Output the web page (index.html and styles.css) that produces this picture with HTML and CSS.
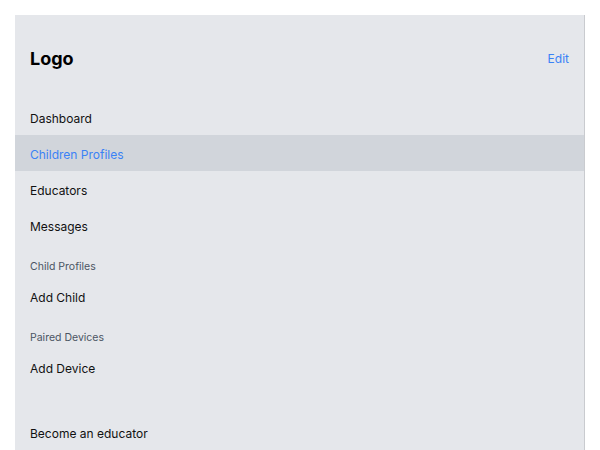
FILE: index.html
```html
<!DOCTYPE html>
<html lang="en">
<head>
    <meta charset="UTF-8">
    <meta name="viewport" content="width=device-width, initial-scale=1.0">
    <title>Sidebar</title>
    <link rel="stylesheet" href="styles.css">
</head>
<body>

    <aside class="sidebar">
        <div class="sidebar-header">
            <span class="logo">Logo</span>
            <a class="edit-link" href="#">Edit</a>
        </div>

        <nav class="nav">
            <a class="nav-item" href="#">Dashboard</a>
            <a class="nav-item active" href="#">Children Profiles</a>
            <a class="nav-item" href="#">Educators</a>
            <a class="nav-item" href="#">Messages</a>

            <div class="nav-label">Child Profiles</div>
            <a class="nav-item" href="#">Add Child</a>

            <div class="nav-label">Paired Devices</div>
            <a class="nav-item" href="#">Add Device</a>
        </nav>

        <div class="sidebar-footer">
            <a class="nav-item" href="#">Become an educator</a>
        </div>
    </aside>

</body>
</html>
```

FILE: styles.css
```css
body {
    margin: 0;
    padding: 15px 15px 0;
    background: #fff;
    font-family: 'Inter', 'Liberation Sans', sans-serif;
    color: #111;
}
.sidebar {
    background: #e5e7eb;
    border-right: 1px solid #c9cbcf;
    min-height: calc(100vh - 15px);
    box-sizing: border-box;
    display: flex;
    flex-direction: column;
}
.sidebar-header {
    display: flex;
    justify-content: space-between;
    align-items: center;
    height: 84px;
    padding: 3px 15px 0;
    box-sizing: border-box;
}
.logo {
    font-size: 18px;
    font-weight: 700;
    color: #000;
}
.edit-link {
    font-size: 12px;
    color: #3b82f6;
    text-decoration: none;
}
.nav {
    display: flex;
    flex-direction: column;
}
.nav-item {
    display: block;
    height: 36px;
    line-height: 39px;
    padding: 0 15px;
    font-size: 12px;
    color: #111;
    text-decoration: none;
}
.nav-item.active {
    background: #d1d5db;
    color: #3b82f6;
}
.nav-label {
    padding: 17px 15px 4px;
    line-height: 14px;
    font-size: 10.5px;
    color: #4b5563;
}
.sidebar-footer {
    margin-top: 29px;
}
```
